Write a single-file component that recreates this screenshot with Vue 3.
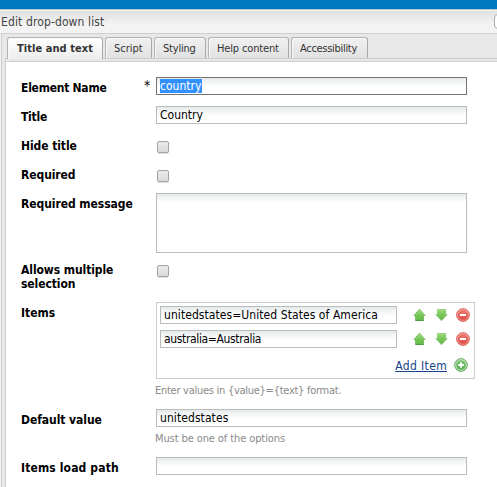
<script setup>
import { ref } from 'vue'

const tabs = [
  { name: 'Title and text', key: 'title', active: true },
  { name: 'Script', key: 'script' },
  { name: 'Styling', key: 'styling' },
  { name: 'Help content', key: 'help' },
  { name: 'Accessibility', key: 'access' },
]

const items = ref([
  { text: 'unitedstates=United States of America', key: 'us' },
  { text: 'australia=Australia', key: 'au' },
])
</script>

<template>
  <div class="window">
    <div class="topbar"></div>
    <header class="header">
      <span class="heading">Edit drop-down list</span>
      <span class="header-button"></span>
    </header>
    <main class="panel">
      <nav class="tabs">
        <div v-for="t in tabs" :key="t.key" class="tab" :class="['tab-' + t.key, { active: t.active }]">
          <span>{{ t.name }}</span>
        </div>
      </nav>
      <div class="tabline"></div>
      <section class="form">
        <div class="row">
          <label class="label l-name">Element Name</label><span class="star">*</span>
          <div class="input focused"><span class="selected">country</span></div>
        </div>
        <div class="row">
          <label class="label l-title">Title</label><span class="star"></span>
          <div class="input"><span class="v-country">Country</span></div>
        </div>
        <div class="row">
          <label class="label l-hide">Hide title</label><span class="star"></span>
          <span class="checkbox"></span>
        </div>
        <div class="row">
          <label class="label l-required">Required</label><span class="star"></span>
          <span class="checkbox"></span>
        </div>
        <div class="row row-message">
          <label class="label l-message">Required message</label><span class="star"></span>
          <div class="input area"></div>
        </div>
        <div class="row row-multiple">
          <label class="label l-multiple">Allows multiple<br>selection</label><span class="star"></span>
          <span class="checkbox"></span>
        </div>
        <div class="row row-items">
          <label class="label l-items">Items</label><span class="star"></span>
          <div class="field">
            <div class="items">
              <div v-for="item in items" :key="item.key" class="item">
                <div class="input item-input"><span :class="'v-' + item.key">{{ item.text }}</span></div>
                <svg class="icon up" width="14" height="14" viewBox="0 0 14 14">
                  <path d="M6.5 1.2 L12.2 7.5 H10.5 V12.5 H2.5 V7.5 H.8 Z" fill="url(#green)" stroke="#6cb457" stroke-width=".8" stroke-linejoin="round" />
                  <path d="M2.5 12.5 H10.5" stroke="#4d9a3f" stroke-width=".9" />
                  <path d="M6.5 2.4 L10.6 6.9 M6.5 2.4 L2.4 6.9" fill="none" stroke="#a9db90" stroke-width=".6" />
                </svg>
                <svg class="icon down" width="14" height="14" viewBox="0 0 14 14">
                  <path d="M6.5 12.8 L.8 6.5 H2.5 V1.5 H10.5 V6.5 H12.2 Z" fill="url(#green)" stroke="#86c66d" stroke-width=".8" stroke-linejoin="round" />
                  <path d="M3.3 2.3 H9.7" fill="none" stroke="#b5e39d" stroke-width=".6" />
                </svg>
                <svg class="icon remove" width="14" height="14" viewBox="0 0 14 14">
                  <circle cx="7" cy="7" r="6.4" fill="url(#red)" stroke="#d9635b" stroke-width=".9" />
                  <circle cx="7" cy="7" r="5.4" fill="none" stroke="#f5b2aa" stroke-width=".7" />
                  <path d="M4 7 H10" stroke="#fff" stroke-width="2" />
                </svg>
              </div>
              <div class="add">
                <a class="add-link">Add Item</a>
                <svg class="icon plus" width="14" height="14" viewBox="0 0 14 14">
                  <circle cx="7" cy="7" r="6.4" fill="url(#plus)" stroke="#6fb06a" stroke-width=".9" />
                  <circle cx="7" cy="7" r="5.3" fill="none" stroke="#cdebc8" stroke-width=".9" />
                  <path d="M4.2 7 H9.8 M7 4.2 V9.8" stroke="#fff" stroke-width="1.8" />
                </svg>
              </div>
            </div>
            <p class="hint h-items">Enter values in {value}={text} format.</p>
          </div>
        </div>
        <div class="row row-default">
          <label class="label l-default">Default value</label><span class="star"></span>
          <div class="field">
            <div class="input"><span class="v-default">unitedstates</span></div>
            <p class="hint h-default">Must be one of the options</p>
          </div>
        </div>
        <div class="row">
          <label class="label l-path">Items load path</label><span class="star"></span>
          <div class="input"></div>
        </div>
      </section>
    </main>
    <svg class="defs" width="0" height="0">
      <defs>
        <linearGradient id="green" x1="0" y1="0" x2="0" y2="1">
          <stop offset="0" stop-color="#94d670" /><stop offset="1" stop-color="#5fb844" />
        </linearGradient>
        <linearGradient id="red" x1="0" y1="0" x2="0" y2="1">
          <stop offset="0" stop-color="#ee8178" /><stop offset="1" stop-color="#da4740" />
        </linearGradient>
        <linearGradient id="plus" x1="0" y1="0" x2="0" y2="1">
          <stop offset="0" stop-color="#83c67d" /><stop offset="1" stop-color="#55a84f" />
        </linearGradient>
      </defs>
    </svg>
  </div>
</template>

<style>
body { margin: 0; overflow: hidden; }
</style>

<style scoped>
.window {
  width: 497px;
  height: 487px;
  overflow: hidden;
  display: flex;
  flex-direction: column;
  background: #f2f2f2;
  color: #000;
  font: 12px/14px "DejaVu Sans Condensed", "DejaVu Sans", sans-serif;
  font-stretch: condensed;
  white-space: nowrap;
}
.topbar { height: 9px; flex: none; background: #0079c1; border-bottom: 1px solid #b9c7ce; }
.header {
  height: 22px;
  flex: none;
  display: flex;
  justify-content: space-between;
  border-top: 1px solid #f4f4f4;
  background: linear-gradient(#e0e0e0, #f3f3f3 60%);
  color: #444;
}
.heading { padding: 4px 0 0 1px; letter-spacing: 0.12px; }
.header-button {
  width: 8px;
  height: 13px;
  margin: 3px -7px 0 0;
  border: 1px solid #aaa;
  border-radius: 4px;
  background: #fff;
}
.panel {
  flex: 1;
  margin-left: 1px;
  border: solid #cfcfcf;
  border-width: 1px 0 0 1px;
  background: #e8e8e8;
  display: flex;
  flex-direction: column;
}
.tabs { display: flex; height: 25px; padding: 3px 0 0 5px; box-sizing: border-box; position: relative; z-index: 1; }
.tab {
  height: 21px;
  box-sizing: border-box;
  border: 1px solid #b4b4b4;
  border-right: 1px solid #a8a8a8;
  border-bottom: 0;
  border-radius: 3px 3px 0 0;
  background: linear-gradient(#f0f0f0, #e2e2e2);
  box-shadow: inset 1px 1px #f8f8f8;
  color: #333;
  font-size: 11px;
  padding: 4px 0 0 8px;
  margin-right: 2px;
}
.tab.active { height: 22px; padding-left: 9px; font-weight: bold; background: linear-gradient(#fff, #f4f4f4 60%, #ededed); }
.tab-title { width: 96px; letter-spacing: 0.05px; }
.tab-script { width: 47px; }
.tab-styling { width: 52px; letter-spacing: -0.2px; }
.tab-help { width: 81px; letter-spacing: -0.15px; }
.tab-access { width: 77px; letter-spacing: -0.3px; }
.tabline { height: 2px; margin: -1px 0 0 3px; border: solid #cdcdcd; border-width: 1px 0 0 1px; flex: none; }
.form {
  flex: 1;
  margin-left: 3px;
  border: solid #cfcfcf;
  border-width: 1px 0 0 1px;
  background: #fff;
  padding: 15px 0 0 15px;
}
.row { display: grid; grid-template-columns: 122px 13px 1fr; height: 29px; align-items: start; }
.row-message { height: 66px; }
.row-multiple { height: 43px; }
.row-items { height: 107px; }
.row-default { height: 48px; }
.label { padding-top: 4px; font-weight: bold; letter-spacing: -0.25px; }
.l-title { letter-spacing: -0.25px; }
.l-hide, .l-required, .l-multiple { letter-spacing: -0.08px; }
.l-message, .l-default { letter-spacing: -0.06px; }
.l-items { letter-spacing: 0; }
.l-path { letter-spacing: 0.14px; }
.star { padding: 1px 0 0 1px; font-size: 14px; line-height: 14px; }
.input {
  width: 311px;
  height: 18px;
  box-sizing: border-box;
  border: 1px solid #bcbcbc;
  background: linear-gradient(#e3e8ea, #f0f3f3 3px, #fff 9px);
  padding: 1px 0 0 3px;
}
.focused { border-color: #747474; }
.area { height: 60px; }
.selected { display: inline-block; height: 14px; width: 42px; background: #3390ff; color: #fff; }
.v-us { letter-spacing: 0.07px; }
.v-au { letter-spacing: -0.35px; }
.v-default { letter-spacing: 0.08px; }
.checkbox {
  width: 12px;
  height: 12px;
  box-sizing: border-box;
  margin: 6px 0 0 1px;
  border: 1px solid #a4a4a4;
  border-radius: 2px;
  background: linear-gradient(#eaeaea, #dadada);
  box-shadow: 0 1px 1px #ddd;
}
.items {
  width: 319px;
  height: 77px;
  box-sizing: border-box;
  border: 1px solid #ccc;
  padding: 3px;
}
.item { display: flex; height: 24px; align-items: flex-start; }
.item-input { width: 237px; }
.icon { display: block; flex: none; margin-top: 2px; }
.up { margin-left: 16px; }
.down { margin-left: 8px; }
.remove { margin-left: 7px; }
.add { display: flex; justify-content: flex-end; padding: 2px 3px 0 0; }
.add .plus { margin: 2px 0 0 7px; }
.add-link { color: #15428b; line-height: 14px; padding-top: 3px; letter-spacing: 0.35px; text-decoration: underline; text-underline-offset: 1px; }
.hint { margin: 0; color: #8a8a8a; font-size: 11px; }
.h-items { padding: 5px 0 0; margin-left: -1px; letter-spacing: -0.27px; }
.h-default { padding: 5px 0 0; margin-left: -1px; letter-spacing: -0.1px; }
</style>
